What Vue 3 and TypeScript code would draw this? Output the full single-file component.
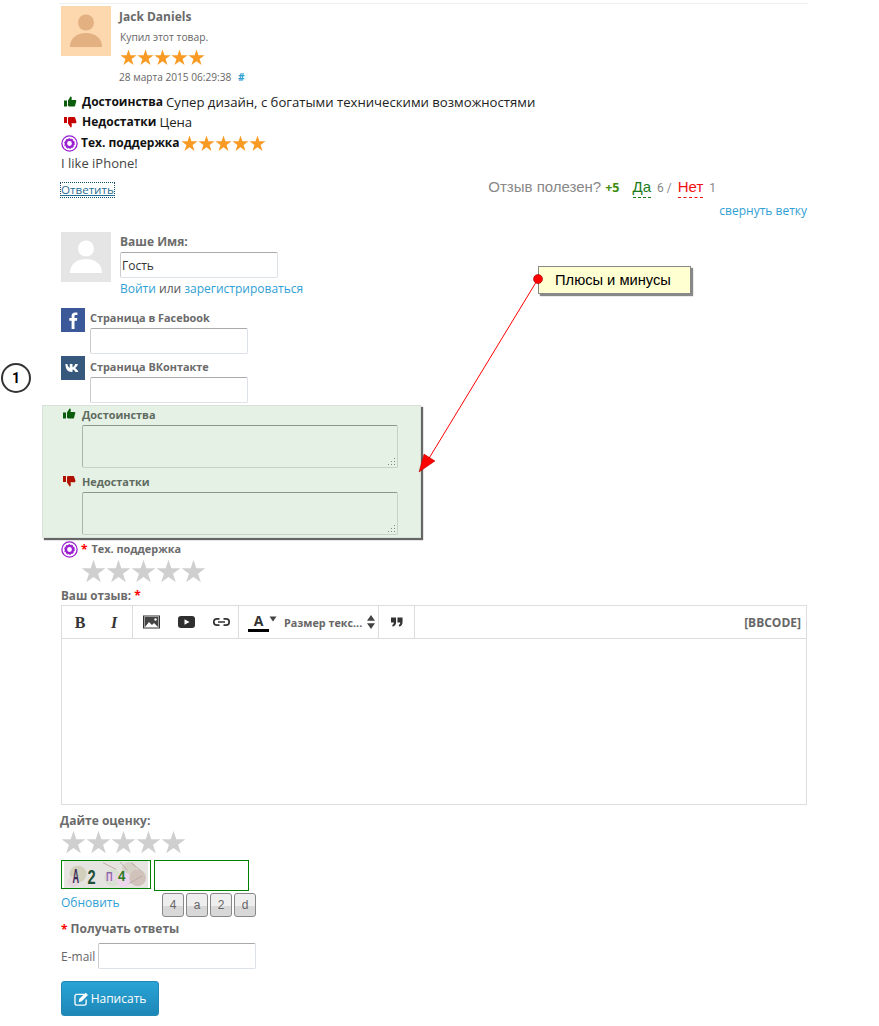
<script setup lang="ts">
const star = '8.5,0.5 10.41,6.37 16.58,6.37 11.59,10 13.5,15.88 8.5,12.25 3.5,15.88 5.41,10 0.42,6.37 6.59,6.37'
const five = [0, 1, 2, 3, 4]
const thumbUp = 'M0 4.500h3v6H0zM4 4.500L6.500 0.500C8 0.500 8 2 7.500 4H11.500C12.500 4 12.500 5.500 12 6L11 10C10.800 10.500 10.300 10.500 10 10.500H5.500L4 10z'
const thumbDown = 'M0 1h3v6H0zM4 1.500L5.500 1H10C10.800 1 11 1.300 11.200 2L12.400 5.500C12.600 7 11.800 7.200 11 7.200H7.500C8 9.500 8 11.500 6.700 11.500L4 7.500z'
</script>

<template>
  <div class="page">
    <main class="column">
      <div class="rule"></div>

      <section class="review">
        <div class="head">
          <svg class="avatar" viewBox="0 0 50 50">
            <rect width="50" height="50" fill="#fdd7ae" />
            <circle cx="25" cy="16.500" r="8" fill="#e3b081" />
            <path d="M9 41C9 32 16 27 25 27S41 32 41 41z" fill="#e3b081" />
          </svg>
          <div class="meta">
            <div class="author">Jack Daniels</div>
            <div class="bought">Купил этот товар.</div>
            <div class="stars-row orange">
              <svg v-for="i in five" :key="i" width="17" height="17" viewBox="0 0 17 17"><polygon :points="star" /></svg>
            </div>
            <div class="date">28 марта 2015 06:29:38 <a class="hash">#</a></div>
          </div>
        </div>

        <div class="line pros"><svg class="thumb" width="13" height="12" viewBox="0 0 13 12"><path :d="thumbUp" fill="#0b5c0b" /></svg><b>Достоинства</b> Супер дизайн, с богатыми техническими возможностями</div>
        <div class="line cons"><svg class="thumb" width="13" height="12" viewBox="0 0 13 12"><path :d="thumbDown" fill="#c60000" /></svg><b>Недостатки</b> Цена</div>
        <div class="line support">
          <svg class="gear" width="17" height="17" viewBox="0 0 17 17"><circle cx="8.500" cy="8.500" r="7.600" fill="none" stroke="#9b1fd1" stroke-width="1.300" /><circle cx="8.500" cy="8.500" r="3.600" fill="none" stroke="#9b1fd1" stroke-width="2.400" /><circle cx="8.500" cy="8.500" r="5" fill="none" stroke="#9b1fd1" stroke-width="1" stroke-dasharray="1.500 1.640" /></svg>
          <b>Тех. поддержка</b>
          <span class="stars-row orange inline">
            <svg v-for="i in five" :key="i" width="17" height="17" viewBox="0 0 17 17"><polygon :points="star" /></svg>
          </span>
        </div>
        <div class="line text">I like iPhone!</div>

        <div class="actions">
          <a class="answer">Ответить</a>
          <div class="useful">Отзыв полезен? <b class="plus">+5</b><span class="yes">Да</span><span class="count">6 /</span><span class="no">Нет</span><span class="count">1</span></div>
        </div>
        <div class="collapse"><a>свернуть ветку</a></div>
      </section>

      <form class="form" @submit.prevent>
        <div class="guest">
          <svg class="avatar" viewBox="0 0 50 50">
            <rect width="50" height="50" fill="#e5e5e5" />
            <circle cx="25" cy="16.500" r="8" fill="#fff" />
            <path d="M9 41C9 32 16 27 25 27S41 32 41 41z" fill="#fff" />
          </svg>
          <div class="guest-fields">
            <label class="lab l12">Ваше Имя:</label>
            <input class="field name" value="Гость" />
            <div class="login"><a>Войти</a> или <a>зарегистрироваться</a></div>
          </div>
        </div>

        <div class="social fb">
          <svg class="soc-icon" viewBox="0 0 24 24"><rect width="24" height="24" fill="#3b5998" /><path d="M13.500 21v-8.200h2.400l.4-2.800h-2.800V8.300c0-.8.300-1.300 1.400-1.300h1.500V4.500c-.3 0-1.200-.1-2.200-.1-2.200 0-3.600 1.300-3.600 3.700V10H8.300v2.800h2.300V21z" fill="#fff" /></svg>
          <div><label class="lab">Страница в Facebook</label><input class="field" /></div>
        </div>
        <div class="social vk">
          <svg class="soc-icon" viewBox="0 0 24 24"><rect width="24" height="24" fill="#36587c" /><path d="M3.500 8h2.900c.1 1.800 1.300 3.600 2.400 3.800V8h2.700v3.200c1-.1 2.200-1.600 2.700-3.200h2.700c-.4 2-1.900 3.500-2.900 4.100 1 .6 2.600 1.800 3.400 3.900h-3c-.5-1.400-1.700-2.500-2.900-2.600V16h-.6c-4.500 0-6.300-3-6.500-8z" fill="#fff" /></svg>
          <div><label class="lab">Страница ВКонтакте</label><input class="field" /></div>
        </div>

        <div class="highlight">
          <div class="hl-label"><svg class="thumb" width="13" height="12" viewBox="0 0 13 12"><path :d="thumbUp" fill="#0b5c0b" /></svg><span>Достоинства</span></div>
          <div class="area-wrap">
            <textarea class="area"></textarea>
            <svg class="grip" width="8" height="8" viewBox="0 0 8 8" fill="#7f8c80"><rect x="6" y="0" width="1" height="1" /><rect x="3" y="3" width="1" height="1" /><rect x="6" y="3" width="1" height="1" /><rect x="0" y="6" width="1" height="1" /><rect x="3" y="6" width="1" height="1" /><rect x="6" y="6" width="1" height="1" /></svg>
          </div>
          <div class="hl-label second"><svg class="thumb" width="13" height="12" viewBox="0 0 13 12"><path :d="thumbDown" fill="#b01000" /></svg><span>Недостатки</span></div>
          <div class="area-wrap">
            <textarea class="area"></textarea>
            <svg class="grip" width="8" height="8" viewBox="0 0 8 8" fill="#7f8c80"><rect x="6" y="0" width="1" height="1" /><rect x="3" y="3" width="1" height="1" /><rect x="6" y="3" width="1" height="1" /><rect x="0" y="6" width="1" height="1" /><rect x="3" y="6" width="1" height="1" /><rect x="6" y="6" width="1" height="1" /></svg>
          </div>
        </div>

        <div class="support-input">
          <svg class="gear" width="17" height="17" viewBox="0 0 17 17"><circle cx="8.500" cy="8.500" r="7.600" fill="none" stroke="#9b1fd1" stroke-width="1.300" /><circle cx="8.500" cy="8.500" r="3.600" fill="none" stroke="#9b1fd1" stroke-width="2.400" /><circle cx="8.500" cy="8.500" r="5" fill="none" stroke="#9b1fd1" stroke-width="1" stroke-dasharray="1.500 1.640" /></svg>
          <span class="req">*</span> <span class="lab">Тех. поддержка</span>
        </div>
        <div class="stars-row grey support-stars">
          <svg v-for="i in five" :key="i" width="25" height="25" viewBox="0 0 17 17"><polygon :points="star" /></svg>
        </div>

        <div class="lab your">Ваш отзыв: <span class="req">*</span></div>
        <div class="editor">
          <div class="toolbar">
            <div class="group g1">
              <svg width="16" height="16" viewBox="0 0 16 16"><text x="8" y="13.500" text-anchor="middle" class="tb-serif">B</text></svg>
              <svg width="14" height="16" viewBox="0 0 14 16"><text x="7" y="13.500" text-anchor="middle" class="tb-serif italic">I</text></svg>
            </div>
            <div class="group g2">
              <svg width="17" height="14" viewBox="0 0 17 14"><rect x="0.500" y="1" width="16" height="12" fill="#fff" stroke="#333" /><rect x="1.500" y="2" width="14" height="10" fill="#444" /><path d="M2 12l4-5 3 3 2-2 4 4z" fill="#fff" /><circle cx="12.500" cy="4.500" r="1.200" fill="#fff" /></svg>
              <svg width="17" height="14" viewBox="0 0 17 14"><rect y="1" width="17" height="12" rx="3" fill="#2f2f2f" /><path d="M6.500 4.200v5.600L11.500 7z" fill="#fff" /></svg>
              <svg width="17" height="14" viewBox="0 0 17 14"><path d="M6.500 3.800H4a3.200 3.200 0 000 6.400h2.500M10.500 3.800H13a3.200 3.200 0 010 6.400h-2.500M5 7h7" fill="none" stroke="#333" stroke-width="1.700" /></svg>
            </div>
            <div class="group g3">
              <div class="color"><span class="color-a">A</span><span class="color-bar"></span></div>
              <svg class="caret" width="8" height="6" viewBox="0 0 8 6"><path d="M0.500 0.500h7L4 5.500z" fill="#444" /></svg>
              <span class="size">Размер текс...</span>
              <svg class="updown" width="8" height="14" viewBox="0 0 8 14"><path d="M4 0L8 5.800H0zM4 14L0 8.200H8z" fill="#444" /></svg>
            </div>
            <div class="group g4">
              <svg width="12" height="10" viewBox="0 0 13 10"><path d="M0 0h5.500v5.500C5.500 8 4 9.500 1.500 10V8c1-.3 1.500-1 1.500-2.500H0zM7 0h5.500v5.500C12.500 8 11 9.500 8.500 10V8c1-.3 1.500-1 1.500-2.500H7z" fill="#333" /></svg>
            </div>
            <span class="bbcode">[BBCODE]</span>
          </div>
          <div class="edit-area"></div>
        </div>

        <div class="lab rate">Дайте оценку:</div>
        <div class="stars-row grey rate-stars">
          <svg v-for="i in five" :key="i" width="25" height="25" viewBox="0 0 17 17"><polygon :points="star" /></svg>
        </div>

        <div class="captcha-row">
          <svg class="captcha" width="90" height="29" viewBox="0 0 90 29">
            <rect width="90" height="29" fill="#e6e4e0" />
            <circle cx="15" cy="14" r="9" fill="#d2cfbd" />
            <circle cx="10" cy="22" r="6" fill="#e4d8dc" />
            <circle cx="52" cy="18" r="9" fill="#d8e0d2" />
            <circle cx="50" cy="17" r="5" fill="#ecd4ec" />
            <circle cx="70" cy="9" r="8" fill="#d6d2c8" />
            <circle cx="64" cy="20" r="8" fill="#ecd6ec" />
            <circle cx="79" cy="18" r="9" fill="#d2c2bc" />
            <path d="M42 2L56 9M60 1l8 9M72 2l10 8M70 24l14-8" stroke="#b9a9a4" fill="none" />
            <text transform="translate(9 24) scale(.65 1.4)" class="cap" fill="#3a2c55">A</text>
            <text transform="translate(25 25) scale(1.05 1.5)" class="cap" fill="#24503a">2</text>
            <text transform="translate(45 22) scale(.65 .95)" class="cap" fill="#8e6aa8">П</text>
            <text transform="translate(58 22) scale(.95 1.05)" class="cap" fill="#2b7a22">4</text>
          </svg>
          <input class="captcha-input" />
        </div>
        <div class="refresh-row">
          <a class="refresh">Обновить</a>
          <div class="keys"><span class="key">4</span><span class="key">a</span><span class="key">2</span><span class="key">d</span></div>
        </div>

        <div class="subscribe"><span class="req">*</span> <span class="lab big-lab">Получать ответы</span></div>
        <div class="email"><label>E-mail</label><input class="field" /></div>

        <button class="submit" type="submit">
          <svg width="15" height="14" viewBox="0 0 16 15"><path d="M11 2.500H3A2 2 0 001 4.500v7.500a2 2 0 002 2h8a2 2 0 002-2V8" fill="none" stroke="#fff" stroke-width="1.400" /><path d="M5.500 7.500L12.500 .8l2.500 2.500-7 6.900-3 .6z" fill="#fff" /></svg>
          Написать
        </button>
      </form>
    </main>

    <div class="badge">1</div>
    <div class="note">Плюсы и минусы</div>
    <svg class="arrow" width="879" height="1026" viewBox="0 0 879 1026">
      <line x1="538" y1="279" x2="428" y2="460" stroke="#f00" stroke-width="1" />
      <polygon points="419,472 424,454 435,461" fill="#f00" stroke="#a00" stroke-width="0.500" />
      <circle cx="538" cy="279" r="4.500" fill="#f00" stroke="#900" stroke-width="0.600" />
    </svg>
  </div>
</template>

<style scoped>
.page {
  position: relative;
  width: 879px;
  height: 1026px;
  overflow: hidden;
  background: #fff;
  font-family: "Open Sans", "Liberation Sans", sans-serif;
  color: #333;
}
.column { width: 746px; margin-left: 61px; padding-top: 3px; }
.rule { height: 1px; margin: 0 -1px 0 -2px; background: #eee; }
a { color: #2fa0d4; }
.review { padding-top: 2px; }
.head { display: flex; height: 86px; }
.avatar { width: 50px; height: 50px; flex: none; display: block; }
.meta { margin-left: 8px; padding-top: 1px; color: #666; }
.author { font-weight: 700; font-size: 12px; line-height: 19px; color: #6a6a6a; }
.bought { font-size: 10.300px; line-height: 14px; margin-top: 4px; padding-left: 1px; }
.stars-row { display: flex; }
.stars-row svg { display: block; }
.orange { fill: #f89a24; }
.grey { fill: #cfcfcf; }
.meta .orange { margin: 5px 0 0 0; padding-left: 1px; }
.date { font-size: 10.150px; line-height: 14px; margin-top: 4px; }
.date .hash { margin-left: 4px; font-weight: 700; }
.line { font-size: 13.150px; line-height: 20px; color: #222; white-space: nowrap; display: flex; align-items: center; }
.line b { font-size: 12px; margin-right: 3px; color: #111; }
.thumb { margin: 0 5px 0 3px; flex: none; }
.gear { flex: none; margin-right: 3px; }
.support { height: 20px; margin-top: 1px; }
.support b { margin-right: 1px; }
.text { color: #444; font-size: 13px; }
.actions { display: flex; justify-content: space-between; align-items: flex-start; height: 24px; margin-top: 7px; }
.answer { font-size: 11.600px; line-height: 14px; color: #1f6d94; text-decoration: underline; outline: 1px dotted #14506f; margin-top: 3px; }
.useful { font-family: "Liberation Sans", Arial, sans-serif; font-size: 15px; color: #888; margin: -3px 91px 0 0; line-height: 20px; white-space: nowrap; display: flex; align-items: baseline; }
.plus { font-family: "Open Sans", sans-serif; font-size: 12.500px; color: #3e8e0d; margin-left: 4px; }
.yes { color: #1a7a1a; border-bottom: 1px dashed #1a7a1a; font-size: 15px; margin-left: 13px; line-height: 20px; }
.no { color: #f01010; border-bottom: 1px dashed #f01010; font-size: 15px; margin-left: 6px; line-height: 20px; }
.count { font-family: Roboto, sans-serif; font-size: 12px; margin-left: 6px; }
.collapse { text-align: right; font-size: 12px; line-height: 16px; margin-top: -1px; }
.form { margin-top: 13px; }
.guest { display: flex; height: 76px; }
.guest-fields { margin-left: 9px; }
.lab { display: block; font-weight: 700; font-size: 10.900px; line-height: 16px; color: #6b6b6b; }
.l12 { font-size: 12px; margin-top: 2px; }
.field { display: block; box-sizing: border-box; width: 158px; height: 26px; padding: 0 1px; border: 1px solid #dde1e8; border-top-color: #aaa; border-left-color: #ccc; border-radius: 2px; background: #fff; font: 12px "Open Sans", sans-serif; color: #333; outline: none; }
.name { margin-top: 2px; }
.login { font-size: 12px; line-height: 17px; margin-top: 2px; color: #555; white-space: nowrap; }
.social { display: flex; height: 48px; }
.soc-icon { width: 24px; height: 24px; flex: none; margin-right: 5px; display: block; }
.social .lab { margin-top: 2px; margin-bottom: 2px; }
.social.vk .lab { margin-top: 3px; }
.highlight { box-sizing: border-box; width: 379px; height: 133px; margin-left: -19px; margin-top: 1px; padding: 0 0 0 20px; background: #e6f1e6; border: 1px solid #d8e2d8; box-shadow: 2px 2px 1px #666; position: relative; }
.hl-label { display: flex; align-items: center; height: 16px; font-size: 10.900px; font-weight: 700; color: #5f6b5f; }
.hl-label .thumb { margin: 0 6px 0 0; }
.second { margin-top: 5px; }
.area-wrap { position: relative; width: 316px; height: 43px; margin: 3px 0 0 19px; }
.area { display: block; box-sizing: border-box; width: 316px; height: 43px; background: #e6f1e6; border: 1px solid #c6d2c8; border-top-color: #8a988c; border-left-color: #aab6ac; border-radius: 2px; outline: none; resize: none; }
.grip { position: absolute; right: 2px; bottom: 2px; }
.support-input { display: flex; align-items: center; height: 19px; margin-top: 2px; font-size: 11px; font-weight: 700; }
.req { color: #f00; font-weight: 700; font-size: 12px; }
.support-input .lab { margin: -2px 0 0 4px; }
.support-stars { margin: 0 0 0 20px; }
.your { margin-top: 3px; line-height: 17px; font-size: 11.700px; }
.editor { box-sizing: border-box; width: 746px; height: 200px; margin-top: 1px; border: 1px solid #ddd; }
.toolbar { display: flex; box-sizing: border-box; height: 33px; align-items: stretch; border-bottom: 1px solid #ddd; }
.group { display: flex; align-items: center; border-right: 1px solid #ddd; box-sizing: border-box; }
.g1 { width: 71px; padding-left: 10px; gap: 19px; }
.g2 { width: 106px; padding-left: 10px; gap: 18px; }
.g3 { width: 140px; padding-left: 9px; position: relative; }
.g4 { width: 36px; padding-left: 12px; }
.tb-serif { font: 700 16px "Liberation Serif", serif; fill: #333; }
.italic { font-style: italic; }
.color { display: flex; flex-direction: column; align-items: center; width: 21px; }
.color-a { font-size: 14px; font-weight: 700; line-height: 17px; color: #333; }
.color-bar { width: 21px; height: 3px; background: #000; }
.caret { margin: -6px 0 0 0; }
.size { font-size: 10.800px; font-weight: 700; color: #666; margin-left: 7px; white-space: nowrap; }
.updown { margin-left: 5px; }
.bbcode { margin-left: auto; align-self: center; font-size: 12px; font-weight: 700; color: #666; padding-right: 5px; }
.edit-area { height: 165px; }
.rate { font-size: 12px; margin-top: 8px; line-height: 16px; margin-left: -1px; }
.rate-stars { margin-top: 1px; }
.captcha-row { display: flex; align-items: flex-start; margin-top: 5px; }
.captcha { box-sizing: border-box; border: 1px solid #008000; display: block; }
.cap { font: 700 15px "Liberation Sans", sans-serif; }
.captcha-input { box-sizing: border-box; width: 95px; height: 31px; margin-left: 3px; border: 1px solid #008000; outline: none; background: #fff; }
.refresh-row { display: flex; height: 24px; margin-top: 2px; }
.refresh { font-size: 12px; line-height: 20px; width: 101px; }
.keys { display: flex; gap: 2px; }
.key { box-sizing: border-box; width: 22px; height: 24px; border: 1px solid #888; border-radius: 3px; background: linear-gradient(#eee 0 55%, #d8d8d8 55%); font: 12px/22px "Liberation Sans", sans-serif; color: #666; text-align: center; }
.subscribe { display: flex; align-items: center; gap: 3px; margin-top: 4px; height: 16px; }
.big-lab { font-size: 12px; }
.email { display: flex; align-items: center; gap: 3px; margin-top: 6px; font-size: 12px; color: #666; }
.submit { display: flex; align-items: center; justify-content: center; gap: 2px; box-sizing: border-box; width: 98px; height: 35px; margin-top: 12px; padding: 0; border: 1px solid #2288b5; border-radius: 3px; background: linear-gradient(#2aa3d6, #1d87b7); color: #fff; font: 12px "Open Sans", sans-serif; }
.badge { position: absolute; left: 1px; top: 363px; box-sizing: border-box; width: 30px; height: 30px; border: 2px solid #333; border-radius: 50%; background: #fff; font: 700 14px/26px Roboto, sans-serif; color: #000; text-align: center; }
.note { position: absolute; left: 538px; top: 266px; box-sizing: border-box; width: 153px; height: 28px; padding-left: 16px; background: #ffffd2; border: 1px solid #888; box-shadow: 2px 2px 1px #888; font: 14.700px/26px "Liberation Sans", sans-serif; color: #000; }
.arrow { position: absolute; left: 0; top: 0; pointer-events: none; }
</style>
